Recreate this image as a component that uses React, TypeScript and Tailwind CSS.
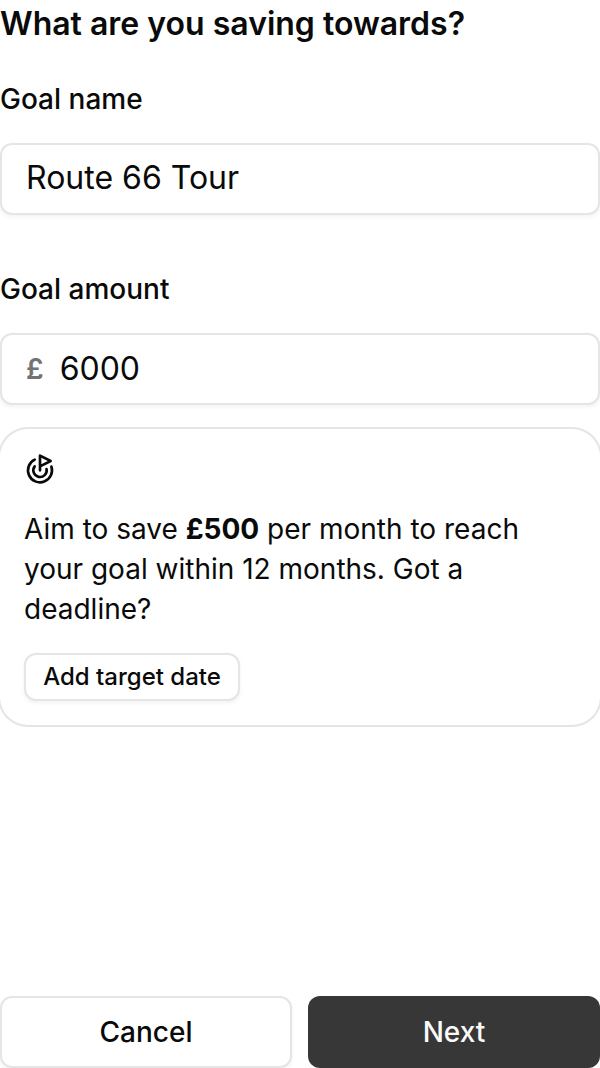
import { Goal } from "lucide-react"

const outline = "border-2 border-[#e5e5e5] bg-white shadow-[0_2px_4px_rgba(0,0,0,0.05)]"

export default function App() {
  return (
    <form
      className="flex min-h-screen flex-col overflow-x-hidden bg-white font-['Inter',sans-serif] text-neutral-950"
      onSubmit={(e) => e.preventDefault()}
    >
      <h1 className="text-[32px] leading-[47px] font-semibold">What are you saving towards?</h1>

      <div className="mt-8 flex flex-col gap-6">
        <label htmlFor="goal-name" className="text-[28px] leading-10 font-medium">
          Goal name
        </label>
        <input
          id="goal-name"
          type="text"
          defaultValue="Route 66 Tour"
          className={`h-18 w-full rounded-xl px-6 pb-1 text-[32px] outline-none ${outline}`}
        />
      </div>

      <div className="mt-[54px] flex flex-col gap-6">
        <label htmlFor="goal-amount" className="text-[28px] leading-10 font-medium">
          Goal amount
        </label>
        <div className={`flex h-18 items-center gap-4 rounded-xl px-6 ${outline}`}>
          <span className="text-[28px] font-semibold text-neutral-500">£</span>
          <input
            id="goal-amount"
            type="text"
            inputMode="decimal"
            defaultValue="6000"
            className="min-w-0 flex-1 bg-transparent text-[32px] outline-none"
          />
        </div>
      </div>

      <section className="mt-6 flex flex-col items-start gap-6 rounded-[28px] p-6 ring-2 ring-[#e5e5e5]">
        <Goal className="size-8" />
        <p className="text-[28px] leading-10">
          Aim to save <strong className="font-bold">£500</strong> per month to reach your goal within 12 months. Got a
          deadline?
        </p>
        <button type="button" className={`h-12 w-54 rounded-xl px-4 text-2xl leading-8 font-medium ${outline}`}>
          Add target date
        </button>
      </section>

      {/* Footer actions */}
      <div className="mt-auto grid grid-cols-2 gap-4 pt-8">
        <button type="button" className={`h-18 rounded-xl text-[28px] font-medium ${outline}`}>
          Cancel
        </button>
        <button type="submit" className="h-18 rounded-xl bg-[#373737] text-[28px] font-medium text-neutral-50">
          Next
        </button>
      </div>
    </form>
  )
}
